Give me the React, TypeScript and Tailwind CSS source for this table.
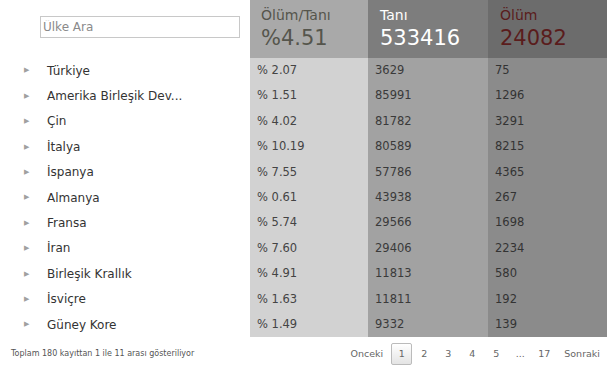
import React from "react";

interface CountryRow {
  name: string;
  rate: string;
  cases: number;
  deaths: number;
}

const rows: CountryRow[] = [
  { name: "Türkiye", rate: "% 2.07", cases: 3629, deaths: 75 },
  { name: "Amerika Birleşik Dev...", rate: "% 1.51", cases: 85991, deaths: 1296 },
  { name: "Çin", rate: "% 4.02", cases: 81782, deaths: 3291 },
  { name: "İtalya", rate: "% 10.19", cases: 80589, deaths: 8215 },
  { name: "İspanya", rate: "% 7.55", cases: 57786, deaths: 4365 },
  { name: "Almanya", rate: "% 0.61", cases: 43938, deaths: 267 },
  { name: "Fransa", rate: "% 5.74", cases: 29566, deaths: 1698 },
  { name: "İran", rate: "% 7.60", cases: 29406, deaths: 2234 },
  { name: "Birleşik Krallık", rate: "% 4.91", cases: 11813, deaths: 580 },
  { name: "İsviçre", rate: "% 1.63", cases: 11811, deaths: 192 },
  { name: "Güney Kore", rate: "% 1.49", cases: 9332, deaths: 139 },
];

const pages = ["2", "3", "4", "5", "...", "17"];

export default function App() {
  return (
    <div className="w-[616px] h-[371px] bg-white overflow-hidden font-['DejaVu_Sans',sans-serif]">
      <div className="grid grid-cols-[250px_118px_120px_119px]">
        {/* header */}
        <div className="h-[58px] flex items-center pl-[40px] pr-[10px]">
          <input
            placeholder="Ülke Ara"
            className="w-[200px] h-[22px] border border-[#c8c8c8] px-[2px] py-0 leading-[20px] text-[12px] text-[#555] placeholder:text-[#8a8a8a] outline-none mb-[4px]"
          />
        </div>
        <div className="h-[58px] bg-[#a9a9a9] pl-[11px] pt-[5px]">
          <div className="text-[14px] text-[#55554c] leading-[20px]">Ölüm/Tanı</div>
          <div className="text-[21px] text-[#55554c] leading-[26px]">%4.51</div>
        </div>
        <div className="h-[58px] bg-[#7d7d7d] pl-[12px] pt-[5px]">
          <div className="text-[14px] text-white font-medium leading-[20px]">Tanı</div>
          <div className="text-[21px] text-white leading-[26px]">533416</div>
        </div>
        <div className="h-[58px] bg-[#6c6c6c] pl-[12px] pt-[5px]">
          <div className="text-[14px] text-[#5a1c1c] leading-[20px]">Ölüm</div>
          <div className="text-[21px] text-[#5a1c1c] leading-[26px]">24082</div>
        </div>

        {/* body */}
        {rows.map((row) => (
          <React.Fragment key={row.name}>
            <div className="h-[25.4px] flex items-center">
              <span className="w-[47px] pl-[24px] text-[7px] text-[#a0a0a0]">▶</span>
              <span className="text-[12px] text-[#333]">{row.name}</span>
            </div>
            <div className="h-[25.4px] flex items-center bg-[#d2d2d2] pl-[7px] text-[11.5px] text-[#444]">
              {row.rate}
            </div>
            <div className="h-[25.4px] flex items-center bg-[#a2a2a2] pl-[7px] text-[11.5px] text-[#3a3a3a]">
              {row.cases}
            </div>
            <div className="h-[25.4px] flex items-center bg-[#8b8b8b] pl-[7px] text-[11.5px] text-[#333]">
              {row.deaths}
            </div>
          </React.Fragment>
        ))}
      </div>

      {/* footer */}
      <div className="flex items-center justify-between h-[33px] pl-[11px] pr-[16px]">
        <div className="text-[8px] text-[#555]">Toplam 180 kayıttan 1 ile 11 arası gösteriliyor</div>
        <div className="flex items-center text-[9.5px] text-[#666]">
          <span className="mr-[8px]">Onceki</span>
          <span className="w-[21px] h-[22px] flex items-center justify-center border border-[#bbb] rounded-[2px] bg-gradient-to-b from-white to-[#e4e4e4]">
            1
          </span>
          {pages.map((p) => (
            <span key={p} className="w-[24px] text-center">
              {p}
            </span>
          ))}
          <span className="ml-[8px]">Sonraki</span>
        </div>
      </div>
    </div>
  );
}
